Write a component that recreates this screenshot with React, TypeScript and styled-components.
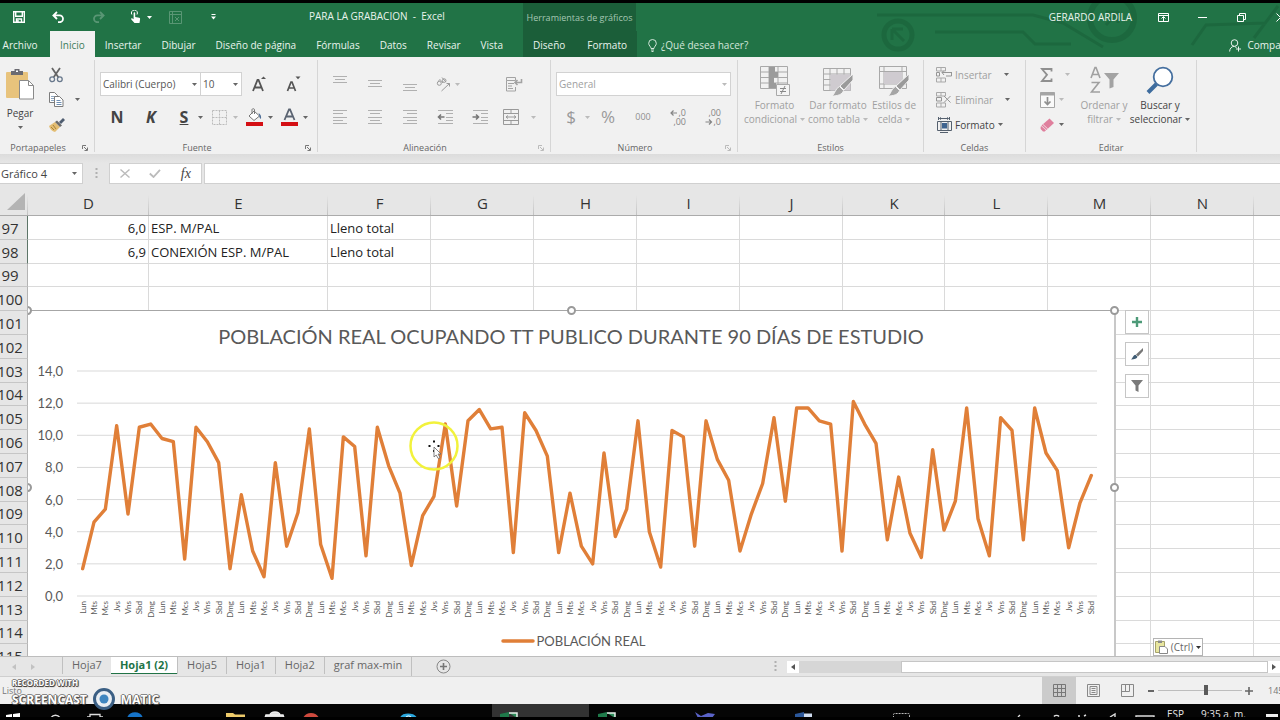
import React from "react";
import styled, { createGlobalStyle, css } from "styled-components";

const UI = `"Open Sans", "Noto Sans", sans-serif`;
const SHEET = `Lato, "Open Sans", sans-serif`;
const GREEN = "#217346";
const SERIES = "#e07f38";

const Global = createGlobalStyle`
  * { box-sizing: border-box; }
  body { margin: 0; font-family: ${UI}; font-size: 10px; color: #444; overflow: hidden; }
  button, input, select { font: inherit; color: inherit; margin: 0; padding: 0; border: 0; background: none; border-radius: 0; }
  button { display: flex; align-items: center; justify-content: center; }
  svg { display: block; flex: none; }
`;

/* ---------- shell ---------- */

const Shell = styled.div`
  display: flex;
  flex-direction: column;
  height: 100vh;
  overflow: hidden;
  background: #e6e6e6;
  border-top: 3px solid #000;
  border-bottom: 3px solid #000;
`;

/* ---------- header ---------- */

const Header = styled.header`
  position: relative;
  flex: none;
  background: ${GREEN};
  color: #e9f3ed;
  overflow: hidden;
`;

const HeaderArt = styled.svg`
  position: absolute;
  top: 0;
  right: 0;
  opacity: 0.16;
`;

const HeaderRow = styled.div<{ $h: number }>`
  position: relative;
  display: flex;
  height: ${(p) => p.$h}px;
`;

const MainPart = styled.div`
  display: flex;
  flex: 0 0 523px;
  align-items: stretch;
`;

const ContextPart = styled.div`
  display: flex;
  flex: 0 0 113px;
  align-items: center;
  justify-content: center;
  background: #1b5e39;
  color: #a5c7b3;
  font-size: 9px;
  white-space: nowrap;
`;

const QuickButton = styled.button<{ $w?: number; $dim?: boolean }>`
  width: ${(p) => p.$w ?? 40}px;
  gap: 6px;
  opacity: ${(p) => (p.$dim ? 0.25 : 1)};
`;

const DocTitle = styled.h1`
  flex: 1;
  margin: 0;
  padding-left: 69px;
  font-size: 10px;
  font-weight: 400;
  line-height: 27px;
  white-space: pre;
`;

const WindowPart = styled.div`
  display: flex;
  flex: 1;
  justify-content: flex-end;
  align-items: center;
  margin-right: -20px;
`;

const WindowButton = styled.button`
  width: 39px;
  height: 27px;
`;

const UserName = styled.span`
  margin-right: 12px;
  white-space: nowrap;
`;

const Tab = styled.button<{ $active?: boolean }>`
  padding: 2px 10px 0;
  white-space: nowrap;
  ${(p) =>
    p.$active &&
    css`
      background: #f1f1f1;
      color: #3e7d5a;
    `}
`;

const FileTab = styled(Tab)`
  width: 50px;
  padding: 2px 10px 0 0;
`;

const ContextTabs = styled(ContextPart)`
  gap: 2px;
  color: #e9f3ed;
  font-size: 10px;
  align-items: stretch;
`;

const TellMe = styled.button`
  gap: 4px;
  padding: 2px 0 0 11px;
  color: #d3e6da;
`;

const Share = styled.button`
  gap: 5px;
  padding-top: 2px;
  margin-left: auto;
  margin-right: -15px;
`;

/* ---------- ribbon ---------- */

const Ribbon = styled.div`
  display: flex;
  flex: none;
  height: 97px;
  padding: 3px 0 2px;
  background: #f1f1f1;
`;

const Group = styled.section<{ $w: number }>`
  display: flex;
  flex-direction: column;
  flex: 0 0 ${(p) => p.$w}px;
  min-width: 0;
  border-right: 1px solid #d6d6d6;
`;

const GroupBody = styled.div<{ $pad?: number }>`
  display: flex;
  flex: 1;
  padding-left: ${(p) => p.$pad ?? 0}px;
`;

const GroupRows = styled.div<{ $pad: number }>`
  display: flex;
  flex: 1;
  flex-direction: column;
  gap: 8px;
  padding: 12px 0 0 ${(p) => p.$pad}px;
`;

const GroupFoot = styled.div<{ $launcher: boolean }>`
  display: grid;
  grid-template-columns: ${(p) => (p.$launcher ? "1fr 18px" : "1fr")};
  height: 12px;
  justify-items: center;
  font-size: 9px;
  line-height: 16px;
  color: #666;
`;

const GroupName = styled.span`
  white-space: nowrap;
`;

const Launcher = styled.button`
  height: 16px;
`;

const ToolRow = styled.div<{ $h?: number }>`
  display: flex;
  align-items: center;
  height: ${(p) => p.$h ?? 26}px;
`;

const Tool = styled.button<{ $w?: number; $gap?: number; $ml?: number }>`
  width: ${(p) => p.$w ?? 35}px;
  height: 24px;
  gap: ${(p) => p.$gap ?? 4}px;
  margin-left: ${(p) => p.$ml ?? 0}px;
`;

const SplitTool = styled.button<{ $ml?: number; $last?: boolean }>`
  display: grid;
  grid-template-columns: 20px 12px;
  justify-items: center;
  height: 24px;
  margin: 0 ${(p) => (p.$last ? 0 : 3)}px 0 ${(p) => p.$ml ?? 0}px;
`;

const Glyph = styled.span<{ $size?: number; $color?: string }>`
  font-size: ${(p) => p.$size ?? 16}px;
  line-height: 20px;
  font-weight: 700;
  color: ${(p) => p.$color ?? "#444"};
`;

const ThinGlyph = styled(Glyph)`
  font-weight: 400;
`;

const Stack = styled.div<{ $pad: number; $w?: number }>`
  display: flex;
  flex-direction: column;
  padding: 2px 0 0 ${(p) => p.$pad}px;
  width: ${(p) => (p.$w ? p.$w + "px" : "auto")};
`;

const StackButton = styled.button<{ $gap?: number; $caretGap?: number; $dim?: boolean }>`
  justify-content: flex-start;
  height: 25px;
  gap: ${(p) => p.$gap ?? 4}px;
  color: ${(p) => (p.$dim ? "#a0a0a0" : "#444")};
  white-space: nowrap;

  & > svg:last-child:not(:first-child) {
    margin-left: ${(p) => p.$caretGap ?? 0}px;
  }
`;

const BigButton = styled.button<{ $w: number; $dim?: boolean }>`
  flex-direction: column;
  justify-content: flex-start;
  width: ${(p) => p.$w}px;
  padding-top: 6px;
  line-height: 14px;
  color: ${(p) => (p.$dim ? "#a0a0a0" : "#444")};
  white-space: nowrap;
`;

const BigLine = styled.span`
  display: flex;
  align-items: center;
  gap: 3px;
`;

const PasteButton = styled(BigButton)`
  gap: 6px;
  padding-top: 8px;
`;

const Combo = styled.label<{ $w: number; $dim?: boolean }>`
  display: flex;
  align-items: center;
  width: ${(p) => p.$w}px;
  height: 24px;
  padding-right: 3px;
  background: #fff;
  border: 1px solid #d2d2d2;
  color: ${(p) => (p.$dim ? "#a0a0a0" : "#555")};
  & + & {
    border-left: 0;
  }
`;

const ComboSelect = styled.select`
  flex: 1;
  min-width: 0;
  padding-left: 2px;
  appearance: none;
  outline: none;
`;

/* ---------- formula bar ---------- */

const FormulaBar = styled.div`
  display: flex;
  flex: none;
  height: 30px;
  padding-top: 9px;
  background: linear-gradient(#dcdcdc, #e6e6e6 9px);
`;

const NameBox = styled.label`
  display: flex;
  align-items: center;
  width: 83px;
  padding-right: 5px;
  background: #fff;
  border: 1px solid #d0d0d0;
  border-left: 0;
  font-size: 11px;
`;

const NameInput = styled.input`
  flex: 1;
  min-width: 0;
  padding-left: 1px;
  outline: none;
`;

const Grip = styled.div`
  display: flex;
  align-items: center;
  justify-content: center;
  width: 26px;
`;

const FormulaTools = styled.div`
  display: flex;
  width: 93px;
  margin-right: 2px;
  background: #fff;
  border: 1px solid #d0d0d0;
`;

const FormulaTool = styled.button`
  flex: 1;
`;

const Fx = styled.i`
  font-family: "Liberation Serif", serif;
  font-size: 14px;
  line-height: 16px;
  color: #444;
`;

const FormulaInput = styled.input`
  && {
    flex: 1;
    min-width: 0;
    background: #fff;
    border: 1px solid #d0d0d0;
    border-right: 0;
    outline: none;
  }
`;

/* ---------- sheet ---------- */

const Sheet = styled.main`
  position: relative;
  flex: 1;
  min-height: 0;
  overflow: hidden;
  background: #fff;
  border-bottom: 1px solid #bdbdbd;
`;

const Grid = styled.table`
  width: 100%;
  table-layout: fixed;
  border-collapse: separate;
  border-spacing: 0;
  color: #222;
`;

const HeadRow = styled.tr`
  height: 32px;
  background: #e6e6e6;
`;

const HeadCell = styled.th`
  padding: 7px 0 0;
  border-bottom: 1px solid #ababab;
  background: linear-gradient(#e6e6e6, #c2c2c2) right bottom / 1px 20px no-repeat;
  font-size: 15px;
  line-height: 20px;
  font-weight: 400;
  color: #333;
  &:last-child {
    background: none;
  }
`;

const CornerCell = styled(HeadCell)`
  padding: 4px 0 0 7px;
`;

const Row = styled.tr`
  height: 24px;
  &:nth-child(5n + 3) {
    height: 23px;
  }
`;

const RowHead = styled.th<{ $marked?: boolean }>`
  padding: 0;
  background: #e6e6e6;
  border-bottom: 1px solid #c6c6c6;
  border-right: 1px solid ${(p) => (p.$marked ? "#5d7568" : "#b4b4b4")};
  font-size: 15px;
  font-weight: 400;
  line-height: 20px;
  color: #333;
`;

const RowNumber = styled.span`
  display: flex;
  justify-content: center;
  width: 20px;
`;

const Cell = styled.td<{ $right?: boolean }>`
  padding: 0 2px;
  border-right: 1px solid #dadada;
  border-bottom: 1px solid #dadada;
  font-size: 13px;
  line-height: 20px;
  text-align: ${(p) => (p.$right ? "right" : "left")};
  white-space: nowrap;
  &:last-child {
    border-right: 0;
  }
`;

const ObjectLayer = styled.div`
  position: absolute;
  inset: 32px 0 0 28px;
  overflow: hidden;
`;

const ChartFrame = styled.figure`
  position: absolute;
  top: 94px;
  left: -1px;
  display: flex;
  flex-direction: column;
  width: 1089px;
  height: 356px;
  margin: 0;
  background: #fff;
  border: 1px solid #a6a6a6;
  border-right: 2px solid #c8c8c8;
  font-family: ${SHEET};
  color: #595959;
`;

const ChartTitle = styled.figcaption`
  padding-top: 11px;
  font-size: 20px;
  line-height: 28px;
  text-align: center;
  white-space: nowrap;
`;

const Plot = styled.svg`
  margin-top: 10px;
`;

const Legend = styled.div`
  display: flex;
  align-items: center;
  justify-content: center;
  gap: 2px;
  margin-top: 7px;
  padding-left: 4px;
  font-size: 13px;
  line-height: 20px;
`;

const Handle = styled.i<{ $x: string; $y: string }>`
  position: absolute;
  left: ${(p) => p.$x};
  top: ${(p) => p.$y};
  width: 9px;
  height: 9px;
  margin: -5px -4px;
  background: #fff;
  border: 2px solid #9a9a9a;
  border-radius: 50%;
`;

const ChartTools = styled.div`
  position: absolute;
  top: 94px;
  left: 1097px;
  display: flex;
  flex-direction: column;
  gap: 8px;
`;

const ChartTool = styled.button`
  && {
    width: 24px;
    height: 24px;
    background: #fff;
    border: 1px solid #c6c6c6;
  }
`;

const PasteOptions = styled.button`
  && {
    position: absolute;
    left: 1125px;
    bottom: 0;
    width: 50px;
    height: 18px;
    gap: 3px;
    background: #fff;
    border: 1px solid #b4b4b4;
    color: #666;
  }
`;

const Pointer = styled.svg`
  position: absolute;
  left: 381px;
  top: 205px;
`;

/* ---------- sheet tabs and status bar ---------- */

const SheetBar = styled.nav`
  display: flex;
  flex: none;
  height: 20px;
  border-bottom: 1px solid #cfcfcf;
  background: #e6e6e6;
`;

const SheetNav = styled.div`
  display: flex;
  align-items: center;
  width: 62px;
  padding-left: 12px;
  gap: 15px;
`;

const SheetTab = styled.button<{ $active?: boolean }>`
  && {
    height: 17px;
    padding: 0 9px 2px;
    border-left: 1px solid #c0c0c0;
    font-size: 11px;
    line-height: 15px;
    color: #666;
    white-space: nowrap;
    ${(p) =>
      p.$active &&
      css`
        background: #fff;
        border-left: 0;
        border-bottom: 1px solid ${GREEN};
        color: ${GREEN};
        font-weight: 700;
      `}
  }
`;

const AddSheet = styled.button`
  && {
    width: 64px;
    border-left: 1px solid #c0c0c0;
  }
`;

const ScrollArea = styled.div`
  display: flex;
  align-items: center;
  flex: 0 0 506px;
  margin-left: auto;
`;

const ScrollGrip = styled.div`
  padding-right: 10px;
`;

const ScrollButton = styled.button`
  && {
    width: 12px;
    height: 12px;
    background: #fff;
  }
`;

const ScrollTrack = styled.div`
  flex: 1;
  height: 12px;
  padding-left: 102px;
  background: #d6d6d6;
`;

const ScrollThumb = styled.div`
  height: 12px;
  background: #fff;
  border: 1px solid #c6c6c6;
`;

const StatusBar = styled.footer`
  position: relative;
  display: flex;
  flex: none;
  align-items: stretch;
  height: 27px;
  background: #f0f0f0;
`;

const StatusText = styled.span`
  padding-left: 2px;
  font-size: 9px;
  line-height: 27px;
  color: #777;
`;

const ViewButton = styled.button<{ $active?: boolean }>`
  && {
    width: 34px;
    background: ${(p) => (p.$active ? "#cbcbcb" : "transparent")};
  }
`;

const ViewTools = styled.div`
  display: flex;
  margin-left: auto;
`;

const ZoomButton = styled.button`
  width: 14px;
`;

const ZoomSlider = styled.input`
  && {
    width: 84px;
    appearance: none;
  }
  &::-webkit-slider-runnable-track {
    height: 11px;
    background: linear-gradient(#bdbdbd, #bdbdbd) center / 100% 1px no-repeat;
  }
  &::-webkit-slider-thumb {
    appearance: none;
    width: 4px;
    height: 10px;
    background: #5a5a5a;
  }
`;

const ZoomValue = styled.span`
  width: 24px;
  margin-left: 12px;
  margin-right: -12px;
  font-size: 9px;
  line-height: 27px;
  color: #777;
`;

const Watermark = styled.div`
  position: absolute;
  left: 12px;
  top: 2px;
  display: flex;
  flex-direction: column;
  font-weight: 700;
  color: #fff;
  text-shadow: 1px 0 0 #555, -1px 0 0 #777, 0 1px 0 #444, 0 -1px 0 #888, 1px 1px 1px #333;
`;

const WatermarkTop = styled.span`
  font-size: 8px;
  line-height: 8px;
`;

const WatermarkMain = styled.span`
  display: flex;
  align-items: center;
  gap: 5px;
  height: 24px;
  font-size: 12px;
`;

const Taskbar = styled.div`
  display: flex;
  flex: none;
  height: 13px;
  overflow: hidden;
  background: #050505;
  color: #e4e4e4;
`;

const TaskTray = styled.div`
  display: flex;
  flex: 1;
  justify-content: flex-end;
  line-height: 20px;
  white-space: nowrap;
`;

const TrayText = styled.span<{ $mr: number }>`
  margin-right: ${(p) => p.$mr}px;
`;

/* ---------- icons ---------- */

const Caret = ({ color = "#666" }: { color?: string }) => (
  <svg width="5" height="3" viewBox="0 0 5 3" aria-hidden>
    <path d="M0 0h5L2.5 3z" fill={color} />
  </svg>
);

const LauncherIcon = ({ dim }: { dim?: boolean }) => (
  <svg width="6" height="6" viewBox="0 0 6 6" fill="none" stroke={dim ? "#bbb" : "#777"}>
    <path d="M.5 4V.5H4M2 2l3 3M5.5 2.5v3h-3" />
  </svg>
);

const Lines = ({ rows }: { rows: [number, number, number][] }) => (
  <svg width="16" height="16" viewBox="0 0 16 16" stroke="#b0b0b0">
    {rows.map(([y, a, b]) => (
      <path key={y} d={`M${a} ${y}H${b}`} />
    ))}
  </svg>
);

const vAlign = (y: number): [number, number, number][] => [
  [y, 1, 15],
  [y + 3, 3, 13],
  [y + 6, 1, 15],
];

const hAlign = (a: number, b: number): [number, number, number][] => [
  [1.5, 1, 15],
  [4.5, a, b],
  [8.5, 1, 15],
  [11.5, a, b],
  [14.5, 1, 15],
];

const Save = () => (
  <svg width="12" height="12" viewBox="0 0 12 12" fill="none" stroke="#fff" strokeWidth="1.4">
    <path d="M.7.7h10.6v10.6H.7zM2.7.7v4.6h6.6V.7M3.5 11V8h5v3M5 9v2" />
  </svg>
);

const Undo = ({ flip }: { flip?: boolean }) => (
  <svg width="13" height="12" viewBox="0 0 13 12" fill="none" stroke="#fff" strokeWidth="1.8">
    <path
      d={
        flip
          ? "M8 1l3.6 3.4L8 8M11.4 4.4h-6a3.4 3.4 0 0 0 0 6.8H7"
          : "M5 1 1.4 4.4 5 8M1.6 4.4h6a3.4 3.4 0 0 1 0 6.8H6"
      }
    />
  </svg>
);

const Touch = () => (
  <svg width="11" height="14" viewBox="0 0 11 14">
    <path d="M1.8 4.5a3 3 0 1 1 5.2 0" fill="none" stroke="#fff" />
    <path d="M3.6 3c0-1 1.6-1 1.6 0v4l4 .8c.8.2 1 .7.9 1.4L9.5 13H4.5L1.3 9.5c-.5-.7.4-1.5 1.1-1l1.2.8z" fill="#fff" />
  </svg>
);

const Macro = () => (
  <svg width="13" height="13" viewBox="0 0 13 13" fill="none" stroke="#fff">
    <path d="M.5.5h12v12H.5zM.5 3.5h12M3.5.5v12M6 6l4 4M10 6l-4 4" />
  </svg>
);

const Customize = () => (
  <svg width="5" height="6" viewBox="0 0 5 6">
    <path d="M.5 0h4v1h-4zM0 2.5h5L2.5 5.5z" fill="#fff" />
  </svg>
);

const Bulb = () => (
  <svg width="9" height="13" viewBox="0 0 9 13" fill="none" stroke="#d3e6da">
    <path d="M3 9.5C3 7.5.7 6.8.7 4.3a3.8 3.8 0 0 1 7.6 0C8.3 6.8 6 7.5 6 9.5zM3 11h3M3.5 12.5h2" />
  </svg>
);

const Person = () => (
  <svg width="13" height="13" viewBox="0 0 13 13" fill="none" stroke="#e9f3ed">
    <circle cx="5.5" cy="4" r="3.3" />
    <path d="M.6 12.5C.8 9.5 2.5 7.5 5 7.4M5.5 7.5l2 1M9.5 7.5v5M7 10h5" />
  </svg>
);

const Clipboard = () => (
  <svg width="30" height="32" viewBox="0 0 30 32">
    <rect x="1" y="4" width="22" height="26" rx="1" fill="#e8c37c" />
    <path d="M6 3h3.5V1h5v2H18v4H6z" fill="#6b6b72" />
    <path d="M11 2.5h2V4h-2z" fill="#fff" />
    <path d="M14.5 12.5h9l5 5V31h-14z" fill="#fff" stroke="#8a8a8a" />
    <path d="M23.5 12.5v5h5" fill="none" stroke="#8a8a8a" />
  </svg>
);

const Scissors = () => (
  <svg width="14" height="16" viewBox="0 0 14 16" fill="none" stroke="#666">
    <path d="M3 1l6.5 9.5M11 1 4.5 10.5" strokeWidth="1.8" />
    <circle cx="3.2" cy="12.3" r="2.4" stroke="#68788c" strokeWidth="1.3" />
    <circle cx="10.8" cy="12.3" r="2.4" stroke="#68788c" strokeWidth="1.3" />
  </svg>
);

const Copy = () => (
  <svg width="15" height="15" viewBox="0 0 15 15" fill="#fff" stroke="#7c7c7c">
    <path d="M.5.5h5l3 3v7h-8z" />
    <path d="M2 4.5h4M2 6.5h4M2 8.5h3" stroke="#8ea7c2" />
    <path d="M5.5 4.5h5l3.5 3.5v6.5H5.5z" />
    <path d="M7.5 8.5h4M7.5 10.5h5M7.5 12.5h5" stroke="#6f8fb3" />
  </svg>
);

const FormatBrush = () => (
  <svg width="16" height="14" viewBox="0 0 16 14">
    <path d="M0 8l6-4 5 5-5 5c-3-.5-5-3-6-6z" fill="#e3bd73" />
    <path d="M6 4l2-1.5 5 5L11 9z" fill="#6a6a6a" />
    <path d="M10 4l4-4 2 2-4 4z" fill="#4f5d70" />
    <path d="M2 9l3 3M4 7l3 4" stroke="#a98338" fill="none" />
  </svg>
);

const Borders = () => (
  <svg width="15" height="15" viewBox="0 0 15 15" fill="none" stroke="#bbb">
    <path d="M.5.5h14v14H.5zM7.5.5v14M.5 7.5h14" strokeDasharray="2 1" />
  </svg>
);

const FillBucket = () => (
  <svg width="17" height="18" viewBox="0 0 17 18">
    <path d="M8 3l5.5 5L8 12.5 3 8z" fill="#fff" stroke="#777" />
    <path d="M6 6V1.5c0-1 2.5-1 2.5 0V6" fill="none" stroke="#777" />
    <path d="M12.5 5c2 1 3 3 2.5 6-1.5-1-2-2.5-1.8-4z" fill="#4d6d96" />
    <path d="M0 14h17v4H0z" fill="#d40f14" />
  </svg>
);

const FontColor = () => (
  <svg width="17" height="18" viewBox="0 0 17 18">
    <path d="M3.5 12 8 1.5h1L13.5 12M5 8.5h7" fill="none" stroke="#5b6472" strokeWidth="1.8" />
    <path d="M0 14h17v4H0z" fill="#d40f14" />
  </svg>
);

const FontSize = ({ up }: { up?: boolean }) => (
  <svg width="15" height="16" viewBox="0 0 15 16">
    {up ? (
      <>
        <path d="M1 15 5.5 4h1L11 15M2.8 11.5h6.6" fill="none" stroke="#555" strokeWidth="1.8" />
        <path d="M9 3h5L11.5.4z" fill="#555" />
      </>
    ) : (
      <>
        <path d="M1.5 15 5 6h1l3.5 9M3 12h5" fill="none" stroke="#555" strokeWidth="1.7" />
        <path d="M9.5.5h5L12 3.2z" fill="#555" />
      </>
    )}
  </svg>
);

const Orientation = () => (
  <svg width="15" height="15" viewBox="0 0 15 15" fill="none" stroke="#999">
    <circle cx="3.3" cy="6.3" r="2" />
    <path d="M2.5 3.5c1-1 2-.6 2.8.3L7 6M6 .5l4 4.6" />
    <circle cx="8.2" cy="3.6" r="1.8" />
    <path d="M5.5 14l8-7.5M10.5 6.5h3v3" />
  </svg>
);

const WrapText = () => (
  <svg width="17" height="16" viewBox="0 0 17 16" fill="none" stroke="#a3a3a3">
    <path d="M.5 1.5h9v3h-9zM.5 4.5v10.5h9V11M2 7.5h6M2 10h4M2 12.5h5" />
    <path d="M15.5 3v3.5H9M11.5 4 9 6.5 11.5 9" strokeWidth="1.6" />
  </svg>
);

const Indent = ({ left }: { left?: boolean }) => (
  <svg width="16" height="16" viewBox="0 0 16 16" fill="none" stroke="#b0b0b0">
    <path d="M1 1.5h15M9 4.5h7M9 8.5h7M9 11.5h7M1 14.5h15" />
    <path d={left ? "M7.5 8H1.5M4 5.5 1.5 8 4 10.5" : "M.5 8H6.5M4 5.5 6.5 8 4 10.5"} stroke="#777" strokeWidth="1.6" />
  </svg>
);

const Merge = () => (
  <svg width="16" height="16" viewBox="0 0 16 16" fill="none" stroke="#999">
    <path d="M.5.5h15v15H.5zM.5 4.5h15M.5 11.5h15M8 .5v4M8 11.5v4M3 8h10M5 6.5 3 8l2 1.5M11 6.5 13 8l-2 1.5" />
  </svg>
);

const Decimals = ({ more }: { more?: boolean }) => (
  <svg width="18" height="18" viewBox="0 0 18 18" fill="#858585" fontFamily="Open Sans" fontSize="9">
    <text x="17" y="8" textAnchor="end">{more ? ",0" : ",00"}</text>
    <text x="17" y="17" textAnchor="end">{more ? ",00" : ",0"}</text>
    <path d={more ? "M8 5H2M4.5 2.5 2 5l2.5 2.5" : "M1.5 14h6M5 11.5 7.5 14 5 16.5"} fill="none" stroke="#858585" strokeWidth="1.2" />
  </svg>
);

const CondFormat = () => (
  <svg width="32" height="32" viewBox="0 0 32 32" fill="none" stroke="#a9a9a9">
    <path d="M1.5.5h27v22h-27zM10 .5v22M19 .5v22M1.5 6h27M1.5 11.5h27M1.5 17h27" />
    <path d="M10 1h6v5h-6zM10 6h9v5.5h-9zM10 11.5h5V17h-5zM10 17h7v5h-7z" fill="#9b9b9b" stroke="none" />
    <path d="M17.5 18.5h13v11h-13z" fill="#f4f4f4" />
    <path d="M21 22.5h6M21 25.5h6M26 20l-4 8" stroke="#888" />
  </svg>
);

const TableFormat = ({ cell }: { cell?: boolean }) => (
  <svg width="32" height="32" viewBox="0 0 32 32" fill="none" stroke="#a9a9a9">
    {cell ? (
      <path d="M1.5.5h27v22h-27zM1.5 5.5h27M6 .5v22M24 .5v22M1.5 18h27" />
    ) : (
      <path d="M1.5 2.5h27v22h-27zM1.5 8h27M1.5 13.5h27M1.5 19h27M8 2.5v22M15 2.5v22M22 2.5v22" />
    )}
    <path d={cell ? "M6 6h18v12H6z" : "M8.5 8.5h20v16h-20z"} fill="#cfcbd0" stroke="none" />
    <path d="M31 8v6l-9 10-4-4z" fill="#9a9a9a" stroke="#f1f1f1" />
    <path d="M17.5 20.5l4 4c-1 4-6 5.5-11.5 5.5 3-2 3.5-8 7.5-9.5z" fill="#a5a5a5" stroke="#f1f1f1" />
  </svg>
);

const CellsIcon = ({ kind }: { kind: "insert" | "delete" | "format" }) => {
  const c = kind === "format" ? "#55606e" : "#a9a9a9";
  return (
    <svg width="16" height="16" viewBox="0 0 16 16" fill="none" stroke={c}>
      {kind === "format" ? (
        <>
          <path d="M1.5 4.5h14v9h-14zM5 4.5v9M12 4.5v9M2.5 0v3M13.5 0v3M3.5 1.5h9M5 .5l-1.5 1L5 2.5M11 .5l1.5 1-1.5 1M4 15.5h8" />
          <path d="M6 6h5v5.5H6z" fill="#3f648f" stroke="none" />
        </>
      ) : (
        <>
          <path d="M.5.5h9v3.5h-9zM5 .5V4M.5 11h9v4h-9zM5 11v4" />
          <path d={kind === "insert" ? "M.5 5.5h3V9h-3zM15.5 5.5H6M8 3.5 6 5.5 8 8M15.5 5v4H10" : "M.5 5.5h5V9h-5zM8 4l6.5 6.5M14.5 4 8 10.5"} stroke="#959595" />
        </>
      )}
    </svg>
  );
};

const Sigma = () => (
  <svg width="13" height="14" viewBox="0 0 13 14" fill="none" stroke="#8f8f8f" strokeWidth="1.8">
    <path d="M11.5 3.5V1H2l5 5.8L2 13h9.5v-2.5" />
  </svg>
);

const FillDown = () => (
  <svg width="15" height="16" viewBox="0 0 15 16" fill="none" stroke="#a5a5a5">
    <path d="M.5.5h14v15H.5z" fill="#fafafa" />
    <path d="M.5 2h14" strokeWidth="3" />
    <path d="M7.5 5v7.5M4.5 9.5l3 3 3-3" stroke="#8f8f8f" strokeWidth="1.7" />
  </svg>
);

const Eraser = () => (
  <svg width="15" height="14" viewBox="0 0 15 14">
    <path d="M9.5.5 14 5 6.5 12 1.5 7.5z" fill="#df7f9d" />
    <path d="M1.2 8 6 12.3 4.8 13.5H3L.6 11V9z" fill="#df7f9d" />
    <path d="M3 6.5 7.8 11" stroke="#f6dbe3" />
  </svg>
);

const SortFilter = () => (
  <svg width="32" height="32" viewBox="0 0 32 32" fill="none" stroke="#a0a0a0">
    <path d="M3 12 7 1.5h1L12 12M4.5 8.5h6" strokeWidth="1.6" />
    <path d="M3.5 16.5h7.5L3.5 26H12" strokeWidth="1.6" />
    <path d="M16 7h15l-5.5 6.5V21l-4 1.5v-9z" fill="#a3a3a3" stroke="none" />
  </svg>
);

const Magnifier = () => (
  <svg width="32" height="32" viewBox="0 0 32 32">
    <path d="M12.5 18 4 26.5" stroke="#3e6c9e" strokeWidth="4" />
    <circle cx="19" cy="11" r="9.3" fill="#fff" stroke="#456f9f" strokeWidth="1.8" />
  </svg>
);

const Dots = () => (
  <svg width="3" height="11" viewBox="0 0 3 11" fill="#b0b0b0">
    <path d="M.5 0h2v2h-2zM.5 4h2v2h-2zM.5 8h2v2h-2z" />
  </svg>
);

const Brush = () => (
  <svg width="14" height="14" viewBox="0 0 14 14">
    <path d="M13 1v3L8 9.5 6 7.5z" fill="#777" />
    <path d="M5.5 7.7l2 2C7 11.5 4.5 12.5 1 12.5c1.5-1 2-4.3 4.5-4.8z" fill="#3f5c74" />
  </svg>
);

const Funnel = () => (
  <svg width="12" height="12" viewBox="0 0 12 12" fill="#7a7a7a">
    <path d="M0 0h12L7.5 5.5V12l-3-1.5v-5z" />
  </svg>
);

const PasteMini = () => (
  <svg width="13" height="14" viewBox="0 0 13 14">
    <path d="M.5 1.5h9v11h-9z" fill="#e8e6a0" stroke="#a6a36a" />
    <path d="M3 .5h4v2.5H3z" fill="#8a8a8a" />
    <path d="M4.5 6.5h5.5l2.5 2.5v4.5h-8z" fill="#fff" stroke="#888" />
  </svg>
);

const GridView = () => (
  <svg width="13" height="13" viewBox="0 0 13 13" fill="none" stroke="#777">
    <path d="M.5.5h12v12H.5zM4.5.5v12M8.5.5v12M.5 4.5h12M.5 8.5h12" />
  </svg>
);

const PageView = () => (
  <svg width="13" height="13" viewBox="0 0 13 13" fill="none" stroke="#888">
    <path d="M.5.5h12v12H.5zM3 2.5h7v8H3zM4.5 4.5h4M4.5 6.5h4M4.5 8.5h4" />
  </svg>
);

const BreakView = () => (
  <svg width="13" height="13" viewBox="0 0 13 13" fill="none" stroke="#888">
    <path d="M.5.5h12v12H.5zM4.5.5v7M8.5.5v7M.5 7.5h8" />
  </svg>
);

/* ---------- data ---------- */

const DAYS = ["Lun", "Mts", "Mcs", "Jvs", "Vns", "Sbd", "Dmg"];

const VALUES = [
  1.7, 4.6, 5.4, 10.6, 5.1, 10.5, 10.7, 9.8, 9.6, 2.3, 10.5, 9.6, 8.3, 1.7, 6.3, 2.8, 1.2, 8.3,
  3.1, 5.2, 10.4, 3.2, 1.1, 9.9, 9.3, 2.5, 10.5, 8.1, 6.4, 1.9, 5, 6.2, 10.7, 5.6, 10.9, 11.6,
  10.4, 10.5, 2.7, 11.4, 10.3, 8.7, 2.7, 6.4, 3.1, 2, 8.9, 3.7, 5.4, 10.9, 4, 1.8, 10.3, 9.9,
  3.1, 10.9, 8.5, 7.2, 2.8, 5.1, 7, 11.1, 5.9, 11.7, 11.7, 10.9, 10.7, 2.8, 12.1, 10.7, 9.5, 3.5,
  7.4, 3.9, 2.4, 9.1, 4.1, 5.9, 11.7, 4.8, 2.5, 11.1, 10.3, 3.5, 11.7, 8.9, 7.8, 3, 5.8, 7.5,
];

const AXIS = { left: 49, right: 1069, top: 11, bottom: 236, max: 14 };
const STEP = (AXIS.right - AXIS.left) / VALUES.length;
const xAt = (i: number) => AXIS.left + STEP * (i + 0.5);
const yAt = (v: number) => AXIS.bottom - (v / AXIS.max) * (AXIS.bottom - AXIS.top);

const COLUMNS = ["D", "E", "F", "G", "H", "I", "J", "K", "L", "M", "N", ""];
const COLUMN_WIDTHS = [28, 121, 179, 103, 103, 103, 103, 103, 102, 103, 103, 103];
const FIRST_ROW = 97;
const DATA: Record<number, string[]> = {
  97: ["6,0", "ESP. M/PAL", "Lleno total"],
  98: ["6,9", "CONEXIÓN ESP. M/PAL", "Lleno total"],
};
const ROWS = Array.from({ length: 19 }, (_, i) => FIRST_ROW + i);

/* ---------- parts ---------- */

const RibbonGroup = ({ name, w, launcher, children }: { name: string; w: number; launcher?: "on" | "dim"; children: React.ReactNode }) => (
  <Group $w={w} aria-label={name}>
    {children}
    <GroupFoot $launcher={Boolean(launcher)}>
      <GroupName>{name}</GroupName>
      {launcher && (
        <Launcher aria-label={`${name}: más opciones`}>
          <LauncherIcon dim={launcher === "dim"} />
        </Launcher>
      )}
    </GroupFoot>
  </Group>
);

const ComboBox = ({ label, value, w, dim }: { label: string; value: string; w: number; dim?: boolean }) => (
  <Combo $w={w} $dim={dim}>
    <ComboSelect aria-label={label} defaultValue={value}>
      <option>{value}</option>
    </ComboSelect>
    <Caret color={dim ? "#bbb" : "#666"} />
  </Combo>
);

const TitleArea = () => (
  <Header>
    <HeaderArt width="430" height="54" viewBox="0 0 430 54" fill="none" stroke="#06301a" strokeWidth="3">
      <path d="M27 12h156l30 8 40 24M85 29h88l12 12h36" />
      <circle cx="48" cy="32" r="14" strokeWidth="5" />
      <path d="M42 26l12 12M42 26v11M42 26h11" />
      <circle cx="262" cy="15" r="22" strokeWidth="6" />
      <path d="M256 9h12v11M256 22l12-13" />
      <path d="M342 42l14-20 60-2M404 35l24-32" />
    </HeaderArt>
    <HeaderRow $h={28}>
      <MainPart>
        <QuickButton $w={38} aria-label="Guardar"><Save /></QuickButton>
        <QuickButton aria-label="Deshacer"><Undo /></QuickButton>
        <QuickButton aria-label="Rehacer" $dim><Undo flip /></QuickButton>
        <QuickButton $w={46} aria-label="Modo táctil"><Touch /><Caret color="#fff" /></QuickButton>
        <QuickButton $w={22} aria-label="Macros" $dim><Macro /></QuickButton>
        <QuickButton $w={54} aria-label="Personalizar"><Customize /></QuickButton>
        <DocTitle>{"PARA LA GRABACION  -  Excel"}</DocTitle>
      </MainPart>
      <ContextPart>Herramientas de gráficos</ContextPart>
      <WindowPart>
        <UserName>GERARDO ARDILA</UserName>
        <WindowButton aria-label="Opciones de cinta">
          <svg width="11" height="9" viewBox="0 0 11 9" fill="none" stroke="#fff"><path d="M.5.5h10v8H.5zM.5 2.5h10M5.5 8V4M3.5 5.5l2-2 2 2" /></svg>
        </WindowButton>
        <WindowButton aria-label="Minimizar">
          <svg width="9" height="1" viewBox="0 0 9 1"><path d="M0 0h9v1H0z" fill="#fff" /></svg>
        </WindowButton>
        <WindowButton aria-label="Restaurar">
          <svg width="9" height="9" viewBox="0 0 9 9" fill="none" stroke="#fff"><path d="M.5 2.5h6v6h-6zM2.5 2V.5h6v6H7" /></svg>
        </WindowButton>
        <WindowButton aria-label="Cerrar">
          <svg width="9" height="9" viewBox="0 0 9 9" fill="none" stroke="#fff"><path d="M.5.5l8 8M8.5.5l-8 8" /></svg>
        </WindowButton>
      </WindowPart>
    </HeaderRow>
    <HeaderRow $h={26}>
      <MainPart>
        <FileTab>Archivo</FileTab>
        <Tab $active>Inicio</Tab>
        {["Insertar", "Dibujar", "Diseño de página", "Fórmulas", "Datos", "Revisar", "Vista"].map((t) => (
          <Tab key={t}>{t}</Tab>
        ))}
      </MainPart>
      <ContextTabs>
        <Tab>Diseño</Tab>
        <Tab>Formato</Tab>
      </ContextTabs>
      <TellMe><Bulb />¿Qué desea hacer?</TellMe>
      <Share><Person />Compartir</Share>
    </HeaderRow>
  </Header>
);

const RibbonArea = () => (
  <Ribbon>
    <RibbonGroup name="Portapapeles" w={95} launcher="on">
      <GroupBody>
        <PasteButton $w={40}>
          <Clipboard />
          Pegar
          <Caret />
        </PasteButton>
        <Stack $pad={9}>
          <StackButton aria-label="Cortar"><Scissors /></StackButton>
          <StackButton aria-label="Copiar" $caretGap={7}><Copy /><Caret /></StackButton>
          <StackButton aria-label="Copiar formato"><FormatBrush /></StackButton>
        </Stack>
      </GroupBody>
    </RibbonGroup>

    <RibbonGroup name="Fuente" w={223} launcher="on">
      <GroupRows $pad={5}>
        <ToolRow $h={24}>
          <ComboBox label="Fuente" value="Calibri (Cuerpo)" w={101} />
          <ComboBox label="Tamaño" value="10" w={41} />
          <Tool $w={34} aria-label="Aumentar tamaño"><FontSize up /></Tool>
          <Tool $w={34} aria-label="Reducir tamaño"><FontSize /></Tool>
        </ToolRow>
        <ToolRow>
          <Tool $w={34}><Glyph>N</Glyph></Tool>
          <Tool $w={34}><Glyph as="i">K</Glyph></Tool>
          <SplitTool $ml={6}><Glyph as="u">S</Glyph><Caret /></SplitTool>
          <SplitTool aria-label="Bordes"><Borders /><Caret color="#bbb" /></SplitTool>
          <SplitTool aria-label="Color de relleno"><FillBucket /><Caret /></SplitTool>
          <SplitTool aria-label="Color de fuente" $last><FontColor /><Caret /></SplitTool>
        </ToolRow>
      </GroupRows>
    </RibbonGroup>

    <RibbonGroup name="Alineación" w={233} launcher="dim">
      <GroupRows $pad={4}>
        <ToolRow $h={24}>
          <Tool aria-label="Alinear arriba"><Lines rows={vAlign(0.5)} /></Tool>
          <Tool aria-label="Alinear al medio"><Lines rows={vAlign(4.5)} /></Tool>
          <Tool aria-label="Alinear abajo"><Lines rows={vAlign(8.5)} /></Tool>
          <Tool $w={41} aria-label="Orientación"><Orientation /><Caret color="#bbb" /></Tool>
          <Tool $ml={29} aria-label="Ajustar texto"><WrapText /></Tool>
        </ToolRow>
        <ToolRow>
          <Tool aria-label="Alinear a la izquierda"><Lines rows={hAlign(1, 11)} /></Tool>
          <Tool aria-label="Centrar"><Lines rows={hAlign(3, 13)} /></Tool>
          <Tool aria-label="Alinear a la derecha"><Lines rows={hAlign(5, 15)} /></Tool>
          <Tool aria-label="Disminuir sangría"><Indent left /></Tool>
          <Tool aria-label="Aumentar sangría"><Indent /></Tool>
          <Tool $w={44} $gap={12} aria-label="Combinar y centrar"><Merge /><Caret color="#bbb" /></Tool>
        </ToolRow>
      </GroupRows>
    </RibbonGroup>

    <RibbonGroup name="Número" w={187} launcher="dim">
      <GroupRows $pad={5}>
        <ToolRow $h={24}>
          <ComboBox label="Formato de número" value="General" w={175} dim />
        </ToolRow>
        <ToolRow>
          <SplitTool $ml={5} $last><ThinGlyph $size={17} $color="#999">$</ThinGlyph><Caret color="#bbb" /></SplitTool>
          <Tool $w={30}><ThinGlyph $size={17} $color="#999">%</ThinGlyph></Tool>
          <Tool $w={40}><ThinGlyph $size={9} $color="#8f8f8f">000</ThinGlyph></Tool>
          <Tool $w={30} aria-label="Aumentar decimales"><Decimals more /></Tool>
          <Tool $w={40} aria-label="Disminuir decimales"><Decimals /></Tool>
        </ToolRow>
      </GroupRows>
    </RibbonGroup>

    <RibbonGroup name="Estilos" w={186}>
      <GroupBody $pad={4}>
        <BigButton $w={65} $dim><CondFormat />Formato<BigLine>condicional<Caret color="#bbb" /></BigLine></BigButton>
        <BigButton $w={62} $dim><TableFormat />Dar formato<BigLine>como tabla<Caret color="#bbb" /></BigLine></BigButton>
        <BigButton $w={50} $dim><TableFormat cell />Estilos de<BigLine>celda<Caret color="#bbb" /></BigLine></BigButton>
      </GroupBody>
    </RibbonGroup>

    <RibbonGroup name="Celdas" w={102}>
      <GroupBody>
        <Stack $pad={12}>
          <StackButton $dim $gap={3} $caretGap={9}><CellsIcon kind="insert" />Insertar<Caret /></StackButton>
          <StackButton $dim $gap={3} $caretGap={9}><CellsIcon kind="delete" />Eliminar<Caret /></StackButton>
          <StackButton $gap={3}><CellsIcon kind="format" />Formato<Caret /></StackButton>
        </Stack>
      </GroupBody>
    </RibbonGroup>

    <RibbonGroup name="Editar" w={171}>
      <GroupBody>
        <Stack $pad={14} $w={54}>
          <StackButton aria-label="Autosuma" $caretGap={8}><Sigma /><Caret color="#bbb" /></StackButton>
          <StackButton aria-label="Rellenar"><FillDown /><Caret color="#bbb" /></StackButton>
          <StackButton aria-label="Borrar"><Eraser /><Caret /></StackButton>
        </Stack>
        <BigButton $w={48} $dim><SortFilter />Ordenar y<BigLine>filtrar<Caret color="#bbb" /></BigLine></BigButton>
        <BigButton $w={64}><Magnifier />Buscar y<BigLine>seleccionar<Caret /></BigLine></BigButton>
      </GroupBody>
    </RibbonGroup>
  </Ribbon>
);

const Chart = () => (
  <ChartFrame>
    <ChartTitle>POBLACIÓN REAL OCUPANDO TT PUBLICO DURANTE 90 DÍAS DE ESTUDIO</ChartTitle>
    <Plot width="1086" height="264" viewBox="0 0 1086 264" fill="#595959" role="img" aria-label="Población real por día">
      {Array.from({ length: 8 }, (_, i) => i * 2).map((v) => (
        <g key={v}>
          <path d={`M${AXIS.left} ${yAt(v)}H${AXIS.right}`} stroke="#d9d9d9" strokeWidth="1" />
          <text x="35" y={yAt(v) + 5} fontSize="13" textAnchor="end">{`${v},0`}</text>
        </g>
      ))}
      {VALUES.map((_, i) => (
        <text key={i} transform={`translate(${xAt(i) + 3} 241) rotate(-90)`} fontSize="8" textAnchor="end">
          {DAYS[i % 7]}
        </text>
      ))}
      <polyline
        points={VALUES.map((v, i) => `${xAt(i)},${yAt(v)}`).join(" ")}
        fill="none"
        stroke={SERIES}
        strokeWidth="3.4"
        strokeLinejoin="round"
        strokeLinecap="round"
      />
    </Plot>
    <Legend>
      <svg width="34" height="4" viewBox="0 0 34 4"><path d="M2 2h30" stroke={SERIES} strokeWidth="3.5" strokeLinecap="round" /></svg>
      POBLACIÓN REAL
    </Legend>
    <Handle $x="-1px" $y="0" />
    <Handle $x="50%" $y="0" />
    <Handle $x="100%" $y="0" />
    <Handle $x="-1px" $y="50%" />
    <Handle $x="100%" $y="50%" />
  </ChartFrame>
);

const SheetArea = () => (
  <Sheet>
    <Grid>
      <colgroup>
        {COLUMN_WIDTHS.map((w, i) => (
          <col key={i} width={w} />
        ))}
        <col />
      </colgroup>
      <thead>
        <HeadRow>
          <CornerCell aria-label="Seleccionar todo">
            <svg width="18" height="17" viewBox="0 0 18 17"><path d="M18 0v17H0z" fill="#b4b4b4" /></svg>
          </CornerCell>
          {COLUMNS.map((c, i) => (
            <HeadCell key={i}>{c}</HeadCell>
          ))}
        </HeadRow>
      </thead>
      <tbody>
        {ROWS.map((n) => (
          <Row key={n}>
            <RowHead $marked={n in DATA}><RowNumber>{n}</RowNumber></RowHead>
            {COLUMNS.map((_, i) => (
              <Cell key={i} $right={i === 0}>{DATA[n]?.[i]}</Cell>
            ))}
          </Row>
        ))}
      </tbody>
    </Grid>
    <ObjectLayer>
      <Chart />
      <ChartTools>
        <ChartTool aria-label="Elementos de gráfico">
          <svg width="10" height="10" viewBox="0 0 10 10"><path d="M5 0v10M0 5h10" stroke="#4d9a78" strokeWidth="2.4" /></svg>
        </ChartTool>
        <ChartTool aria-label="Estilos de gráfico"><Brush /></ChartTool>
        <ChartTool aria-label="Filtros de gráfico"><Funnel /></ChartTool>
      </ChartTools>
      <PasteOptions><PasteMini />(Ctrl)<Caret color="#333" /></PasteOptions>
      <Pointer width="50" height="50" viewBox="0 0 50 50" fill="none">
        <circle cx="25" cy="25" r="23.5" stroke="#f2f23c" strokeWidth="2.5" />
        <path d="M25 19.5v2M25 29v2M19.5 25h2M28.5 25h2" stroke="#111" strokeWidth="2" />
        <path d="M25 26v10l2.2-2 2 3.5 1.8-1-2-3.5h3z" fill="#fff" stroke="#666" strokeWidth=".8" />
      </Pointer>
    </ObjectLayer>
  </Sheet>
);

const BottomArea = () => (
  <>
    <SheetBar>
      <SheetNav>
        <svg width="4" height="6" viewBox="0 0 4 6"><path d="M4 0v6L0 3z" fill="#c2c2c2" /></svg>
        <svg width="4" height="6" viewBox="0 0 4 6"><path d="M0 0v6l4-3z" fill="#c2c2c2" /></svg>
      </SheetNav>
      <SheetTab>Hoja7</SheetTab>
      <SheetTab $active>Hoja1 (2)</SheetTab>
      <SheetTab>Hoja5</SheetTab>
      <SheetTab>Hoja1</SheetTab>
      <SheetTab>Hoja2</SheetTab>
      <SheetTab>graf max-min</SheetTab>
      <AddSheet aria-label="Hoja nueva">
        <svg width="15" height="15" viewBox="0 0 15 15" fill="none" stroke="#888"><circle cx="7.5" cy="7.5" r="6.5" /><path d="M7.5 4v7M4 7.5h7" strokeWidth="1.6" stroke="#777" /></svg>
      </AddSheet>
      <ScrollArea>
        <ScrollGrip><Dots /></ScrollGrip>
        <ScrollButton aria-label="Desplazar a la izquierda">
          <svg width="4" height="6" viewBox="0 0 4 6"><path d="M4 0v6L0 3z" fill="#555" /></svg>
        </ScrollButton>
        <ScrollTrack><ScrollThumb /></ScrollTrack>
        <ScrollButton aria-label="Desplazar a la derecha">
          <svg width="4" height="6" viewBox="0 0 4 6"><path d="M0 0v6l4-3z" fill="#555" /></svg>
        </ScrollButton>
      </ScrollArea>
    </SheetBar>
    <StatusBar>
      <StatusText>Listo</StatusText>
      <ViewTools>
        <ViewButton $active aria-label="Normal"><GridView /></ViewButton>
        <ViewButton aria-label="Diseño de página"><PageView /></ViewButton>
        <ViewButton aria-label="Salto de página"><BreakView /></ViewButton>
        <ZoomButton aria-label="Alejar">
          <svg width="6" height="2" viewBox="0 0 6 2"><path d="M0 0h6v2H0z" fill="#666" /></svg>
        </ZoomButton>
        <ZoomSlider type="range" min={0} max={100} defaultValue={57} aria-label="Zoom" />
        <ZoomButton aria-label="Acercar">
          <svg width="8" height="8" viewBox="0 0 8 8"><path d="M4 0v8M0 4h8" stroke="#666" strokeWidth="1.6" /></svg>
        </ZoomButton>
        <ZoomValue>145%</ZoomValue>
      </ViewTools>
      <Watermark>
        <WatermarkTop>RECORDED WITH</WatermarkTop>
        <WatermarkMain>
          SCREENCAST
          <svg width="24" height="24" viewBox="0 0 24 24">
            <circle cx="12" cy="12" r="9.5" fill="#e9eef3" stroke="#3b5f84" strokeWidth="3" />
            <circle cx="12" cy="12" r="4.5" fill="#3f86c0" />
          </svg>
          MATIC
        </WatermarkMain>
      </Watermark>
    </StatusBar>
    <Taskbar>
      <svg width="930" height="14" viewBox="0 0 930 14" fill="none">
        <path d="M492 0h97v14h-97z" fill="#333" />
        <path d="M6 11l6-1v4H6zM13 10l7-1v5h-7z" fill="#fff" />
        <path d="M51 14a5 5 0 0 1 9 0" stroke="#ddd" strokeWidth="1.5" />
        <path d="M87 13h3v-2.5h10V13h3" stroke="#ddd" strokeWidth="1.3" />
        <path d="M127 14a8.5 8.5 0 0 1 16 0z" fill="#1673c8" />
        <path d="M226 14V9h7l2 1.5h10V14z" fill="#edca6a" />
        <path d="M265 14l1-3h17l1 3zM270 11c1-4 9-4 10 0" stroke="#eee" strokeWidth="1.5" fill="#ddd" />
        <path d="M303 14a9 9 0 0 1 16 0z" fill="#cf4a3e" />
        <path d="M400 14c1-6 15-6 17 0z" fill="#2aa7dd" />
        <path d="M405 14a4 4 0 0 1 7 0" stroke="#fff" />
        <path d="M500 10l9-2v6h-9zM598 10l9-2v6h-9z" fill="#1f7a4a" />
        <path d="M509 9h8v5M607 9h8v5" stroke="#e6efe9" strokeWidth="1.5" fill="#2d8b59" />
        <path d="M695 8l6 4 7-3 7 1-3 4h-14z" fill="#5a63c8" />
        <path d="M795 10l9-2v6h-9z" fill="#2b579a" />
        <path d="M804 9.5h8V14h-8z" fill="#cfdcf0" />
        <path d="M893.5 14v-3.5a1 1 0 0 1 1-1h14a1 1 0 0 1 1 1V14" stroke="#bbb" strokeDasharray="2 1" />
      </svg>
      <TaskTray>
        <svg width="160" height="14" viewBox="0 0 160 14" fill="none" stroke="#ddd" strokeWidth="1.4">
          <path d="M11 13l2-2M47 12.5c1-1.5 4-1.5 5 0M71 12h2M77 12l2-1M103 13l5-3v3M129 13.5V12h18v1.5" />
        </svg>
        <TrayText $mr={17}>ESP</TrayText>
        <TrayText $mr={20}>9:35 a. m.</TrayText>
        <svg width="14" height="14" viewBox="0 0 14 14"><path d="M0 10h12v4H0z" fill="#eee" /></svg>
      </TaskTray>
    </Taskbar>
  </>
);

export default function App() {
  return (
    <Shell>
      <Global />
      <TitleArea />
      <RibbonArea />
      <FormulaBar>
        <NameBox>
          <NameInput aria-label="Cuadro de nombres" defaultValue="Gráfico 4" />
          <Caret />
        </NameBox>
        <Grip><Dots /></Grip>
        <FormulaTools>
          <FormulaTool aria-label="Cancelar">
            <svg width="10" height="9" viewBox="0 0 10 9"><path d="M.5.5l9 8M9.5.5l-9 8" stroke="#bbb" strokeWidth="1.4" /></svg>
          </FormulaTool>
          <FormulaTool aria-label="Introducir">
            <svg width="12" height="9" viewBox="0 0 12 9" fill="none"><path d="M.8 4.5 4.5 8 11 .8" stroke="#bbb" strokeWidth="1.8" /></svg>
          </FormulaTool>
          <FormulaTool>
            <Fx>fx</Fx>
          </FormulaTool>
        </FormulaTools>
        <FormulaInput aria-label="Barra de fórmulas" />
      </FormulaBar>
      <SheetArea />
      <BottomArea />
    </Shell>
  );
}
